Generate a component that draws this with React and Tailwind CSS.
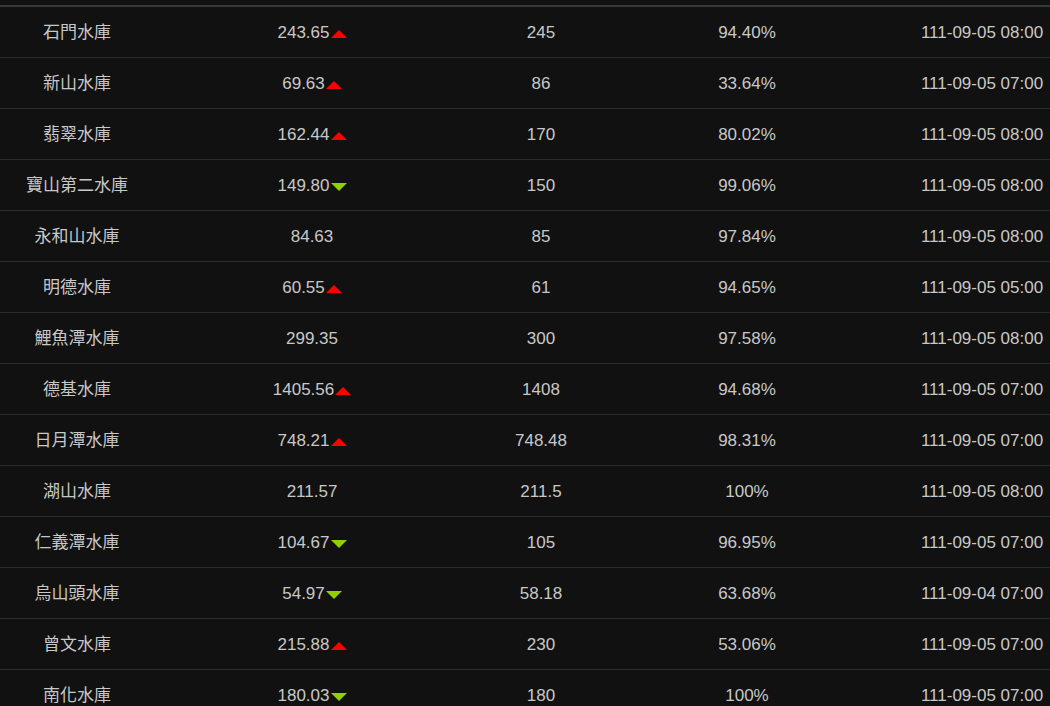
import React from "react";

const rows = [
  ["石門水庫", "243.65", "up", "245", "94.40%", "111-09-05 08:00"],
  ["新山水庫", "69.63", "up", "86", "33.64%", "111-09-05 07:00"],
  ["翡翠水庫", "162.44", "up", "170", "80.02%", "111-09-05 08:00"],
  ["寶山第二水庫", "149.80", "down", "150", "99.06%", "111-09-05 08:00"],
  ["永和山水庫", "84.63", null, "85", "97.84%", "111-09-05 08:00"],
  ["明德水庫", "60.55", "up", "61", "94.65%", "111-09-05 05:00"],
  ["鯉魚潭水庫", "299.35", null, "300", "97.58%", "111-09-05 08:00"],
  ["德基水庫", "1405.56", "up", "1408", "94.68%", "111-09-05 07:00"],
  ["日月潭水庫", "748.21", "up", "748.48", "98.31%", "111-09-05 07:00"],
  ["湖山水庫", "211.57", null, "211.5", "100%", "111-09-05 08:00"],
  ["仁義潭水庫", "104.67", "down", "105", "96.95%", "111-09-05 07:00"],
  ["烏山頭水庫", "54.97", "down", "58.18", "63.68%", "111-09-04 07:00"],
  ["曾文水庫", "215.88", "up", "230", "53.06%", "111-09-05 07:00"],
  ["南化水庫", "180.03", "down", "180", "100%", "111-09-05 07:00"],
];

function Arrow({ dir }) {
  if (dir === "up") {
    return (
      <span className="inline-block w-0 h-0 ml-px border-l-[8px] border-r-[8px] border-b-[8px] border-l-transparent border-r-transparent border-b-[#ff0000]" />
    );
  }
  if (dir === "down") {
    return (
      <span className="inline-block w-0 h-0 ml-px border-l-[8px] border-r-[8px] border-t-[8px] border-l-transparent border-r-transparent border-t-[#8fd000]" />
    );
  }
  return null;
}

export default function App() {
  return (
    <div
      className="w-[1050px] h-[706px] overflow-hidden bg-[#111111] text-[#c8c8c8] text-[17px] pt-[5px]"
      style={{ fontFamily: '"Liberation Sans", "Noto Sans CJK TC", sans-serif' }}
    >
      <div className="w-[1082px] border-t-2 border-[#383838]">
        {rows.map((r, i) => (
          <div key={i} className="flex h-[51px] pt-[2px] items-center border-b border-[#2c2c2c]">
            <div className="w-[154px] shrink-0 text-center">{r[0]}</div>
            <div className="w-[316px] shrink-0 text-center">
              {r[1]}
              <Arrow dir={r[2]} />
            </div>
            <div className="w-[142px] shrink-0 text-center">{r[3]}</div>
            <div className="w-[270px] shrink-0 text-center">{r[4]}</div>
            <div className="w-[200px] shrink-0 text-center">{r[5]}</div>
          </div>
        ))}
      </div>
    </div>
  );
}
